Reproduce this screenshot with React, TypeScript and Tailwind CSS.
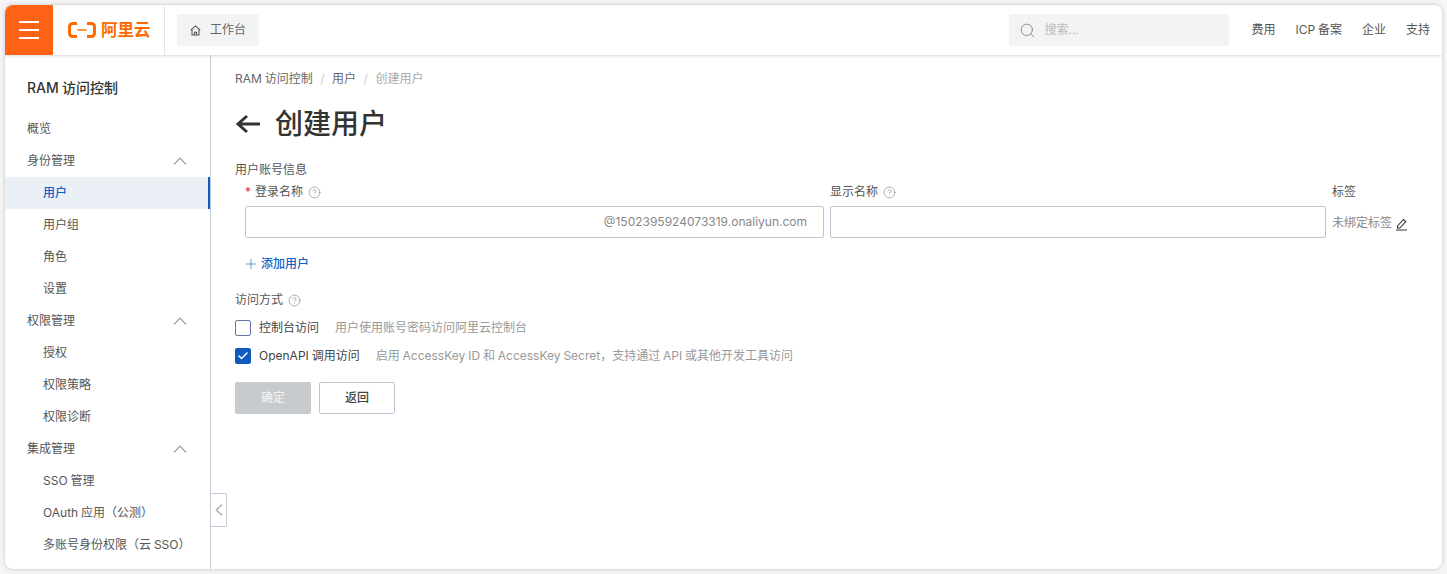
import { Check, CircleHelp, Plus, Search } from "lucide-react";

type NavItem = { label: string; kind: "top" | "group" | "sub"; active?: boolean };

const navItems: NavItem[] = [
  { label: "概览", kind: "top" },
  { label: "身份管理", kind: "group" },
  { label: "用户", kind: "sub", active: true },
  { label: "用户组", kind: "sub" },
  { label: "角色", kind: "sub" },
  { label: "设置", kind: "sub" },
  { label: "权限管理", kind: "group" },
  { label: "授权", kind: "sub" },
  { label: "权限策略", kind: "sub" },
  { label: "权限诊断", kind: "sub" },
  { label: "集成管理", kind: "group" },
  { label: "SSO 管理", kind: "sub" },
  { label: "OAuth 应用（公测）", kind: "sub" },
  { label: "多账号身份权限（云 SSO）", kind: "sub" },
];

function Help() {
  return <CircleHelp className="ml-[5px] h-[13px] w-[13px] text-[#8a8a8a]" strokeWidth={1.3} />;
}

function Logo() {
  return (
    <div className="flex items-center gap-[5px] text-[#ff6a00]">
      <svg width="28" height="16" viewBox="0 0 28 16" fill="none" stroke="currentColor" strokeWidth="3">
        <path d="M9 1.500H5C2.900 1.500 1.500 2.900 1.500 5v6c0 2.100 1.400 3.500 3.500 3.500h4" />
        <path d="M19 1.500h4c2.100 0 3.500 1.400 3.500 3.500v6c0 2.100-1.400 3.500-3.500 3.500h-4" />
        <path d="M9.500 8h9" strokeWidth="1.500" />
      </svg>
      <span className="text-[16.500px] leading-none font-semibold">阿里云</span>
    </div>
  );
}

function Header() {
  return (
    <header className="relative z-10 flex h-[50px] shrink-0 items-center bg-white shadow-[0_1px_3px_rgba(0,0,0,0.16)]">
      <div className="flex h-full w-[48px] flex-col items-center justify-center gap-[6px] bg-[#ff6215]">
        <span className="h-[2px] w-[20px] bg-white" />
        <span className="h-[2px] w-[20px] bg-white" />
        <span className="h-[2px] w-[20px] bg-white" />
      </div>
      <div className="flex h-full w-[112px] items-center border-r border-[#e5e5e5] pl-[15px]">
        <Logo />
      </div>
      <div className="ml-[12px] flex h-[32px] w-[82px] items-center rounded-[2px] bg-[#f1f3f4] pl-[13px] text-[12px] text-[#666]">
        <svg width="11" height="11" viewBox="0 0 12 12" fill="none" stroke="#555" strokeWidth="1.1" className="mr-[9px]">
          <path d="M0.800 5.600 6 1l5.200 4.600M2.200 4.600V11h7.600V4.600M4.800 11V7.800h2.400V11" />
        </svg>
        工作台
      </div>
      <div className="ml-auto flex h-[32px] w-[220px] items-center rounded-[2px] bg-[#f1f3f4] pl-[10px] text-[12px] text-[#bbb]">
        <Search className="mr-[8px] h-[17px] w-[17px] text-[#888]" strokeWidth={1.3} />
        搜索...
      </div>
      <nav className="ml-[22px] flex gap-[20px] pr-[12px] text-[12px] text-[#555]">
        <span>费用</span>
        <span>ICP 备案</span>
        <span>企业</span>
        <span>支持</span>
      </nav>
    </header>
  );
}

function Sidebar() {
  return (
    <aside className="relative w-[206px] shrink-0 border-r border-[#c5ccd6] pt-[22px]">
      <h2 className="mb-[14px] pl-[22px] text-[14px] leading-[22px] font-medium text-[#333]">RAM 访问控制</h2>
      <ul className="text-[12px]">
        {navItems.map((item) => (
          <li
            key={item.label}
            className={`flex h-[32px] items-center justify-between ${item.kind === "sub" ? "pl-[38px]" : "pl-[22px]"} ${
              item.active ? "border-r-2 border-[#0f5cc0] bg-[#ebeff6] font-medium text-[#0f62c4]" : "text-[#555]"
            }`}
          >
            {item.label}
            {item.kind === "group" && (
              <svg width="14" height="8" viewBox="0 0 14 8" fill="none" stroke="#999" strokeWidth="1.2" className="mr-[23px]">
                <path d="M1 7.300 7 1l6 6.300" />
              </svg>
            )}
          </li>
        ))}
      </ul>
      <div className="absolute top-[438px] -right-[17px] flex h-[34px] w-[16px] items-center justify-center rounded-r-[2px] border border-l-0 border-[#c5ccd6] bg-white">
        <svg width="8" height="12" viewBox="0 0 8 12" fill="none" stroke="#aaa" strokeWidth="1.3">
          <path d="M7 0.800 1.200 6 7 11.200" />
        </svg>
      </div>
    </aside>
  );
}

function Field({ label, required, help, grow }: { label: string; required?: boolean; help?: boolean; grow: string }) {
  return (
    <div className={grow}>
      <div className="flex h-[22px] items-center text-[12px] text-[#555]">
        {required && <span className="mr-[4px] text-[#e5322d]">*</span>}
        {label}
        {help && <Help />}
      </div>
    </div>
  );
}

function MainForm() {
  return (
    <main className="min-w-0 flex-1 pl-[24px]">
      <div className="mt-[13px] flex h-[20px] items-center pt-[2px] text-[12px] text-[#666]">
        <span>RAM 访问控制</span>
        <span className="mx-[7.500px] text-[#ccc]">/</span>
        <span>用户</span>
        <span className="mx-[7.500px] text-[#ccc]">/</span>
        <span className="text-[#aaa]">创建用户</span>
      </div>

      <div className="mt-[16px] flex h-[40px] items-center text-[#333]">
        <svg width="25" height="20" viewBox="0 0 25 20" fill="none" stroke="currentColor" strokeWidth="3">
          <path d="M12 2 3 10l9 8M3 10h22" />
        </svg>
        <h1 className="ml-[15px] text-[28px] leading-none font-medium">创建用户</h1>
      </div>

      <div className="mt-[16px] text-[12px] leading-[20px] text-[#555]">用户账号信息</div>

      <div className="mt-[1px] flex pr-[16px] pl-[10px]">
        <Field label="登录名称" required help grow="w-[585px]" />
        <Field label="显示名称" help grow="w-[502px]" />
        <Field label="标签" grow="flex-1" />
      </div>

      <div className="mt-[3px] flex items-center pl-[10px]">
        <div className="flex h-[32px] w-[579px] items-center justify-end rounded-[2px] border border-[#bcc5d1] pr-[16px] text-[12px] text-[#888]">
          @1502395924073319.onaliyun.com
        </div>
        <div className="ml-[6px] h-[32px] w-[496px] rounded-[2px] border border-[#bcc5d1]" />
        <span className="mt-[2px] ml-[6px] text-[12px] text-[#888]">未绑定标签</span>
        <svg width="13" height="14" viewBox="0 0 13 14" fill="none" stroke="#333" strokeWidth="1.1" className="mt-[4px] ml-[3px]">
          <path d="M2.500 9 8.500 2.500l2.300 2L4.800 11H2.500zM1 13h11" />
        </svg>
      </div>

      <div className="mt-[16px] flex h-[20px] items-center pl-[8px] text-[12px] font-medium text-[#0f62c4]">
        <Plus className="mr-[2px] h-[16px] w-[16px] text-[#3d7fd0]" strokeWidth={1.2} />
        添加用户
      </div>

      <div className="mt-[16px] flex h-[20px] items-center text-[12px] text-[#555]">
        访问方式
        <Help />
      </div>

      <div className="mt-[10px] flex h-[16px] items-center text-[12px]">
        <span className="h-[16px] w-[16px] rounded-[2px] border border-[#5f7a9e] bg-white" />
        <span className="ml-[8px] text-[#444]">控制台访问</span>
        <span className="ml-[16px] text-[#999]">用户使用账号密码访问阿里云控制台</span>
      </div>

      <div className="mt-[12px] flex h-[16px] items-center text-[12px]">
        <span className="flex h-[16px] w-[16px] items-center justify-center rounded-[2px] bg-[#0f5cc0]">
          <Check className="h-[12px] w-[12px] text-white" strokeWidth={3} />
        </span>
        <span className="ml-[8px] text-[#444]">OpenAPI 调用访问</span>
        <span className="ml-[16px] text-[#999]">启用 AccessKey ID 和 AccessKey Secret，支持通过 API 或其他开发工具访问</span>
      </div>

      <div className="mt-[18px] flex gap-[8px] text-[12px]">
        <button className="h-[32px] w-[76px] rounded-[2px] bg-[#c8cbce] font-medium text-[#eef0f1]">确定</button>
        <button className="h-[32px] w-[76px] rounded-[2px] border border-[#bcc5d1] font-medium text-[#444]">返回</button>
      </div>
    </main>
  );
}

export default function App() {
  return (
    <div className="h-[574px] w-[1447px] bg-[#f5f5f5] p-[5px] [font-family:Inter,'Noto_Sans_CJK_SC',sans-serif] [word-spacing:-0.5px]">
      <div className="flex h-[564px] w-[1437px] flex-col overflow-hidden rounded-[8px] bg-white shadow-[0_0_4px_rgba(0,0,0,0.2)]">
        <Header />
        <div className="flex min-h-0 flex-1">
          <Sidebar />
          <MainForm />
        </div>
      </div>
    </div>
  );
}
